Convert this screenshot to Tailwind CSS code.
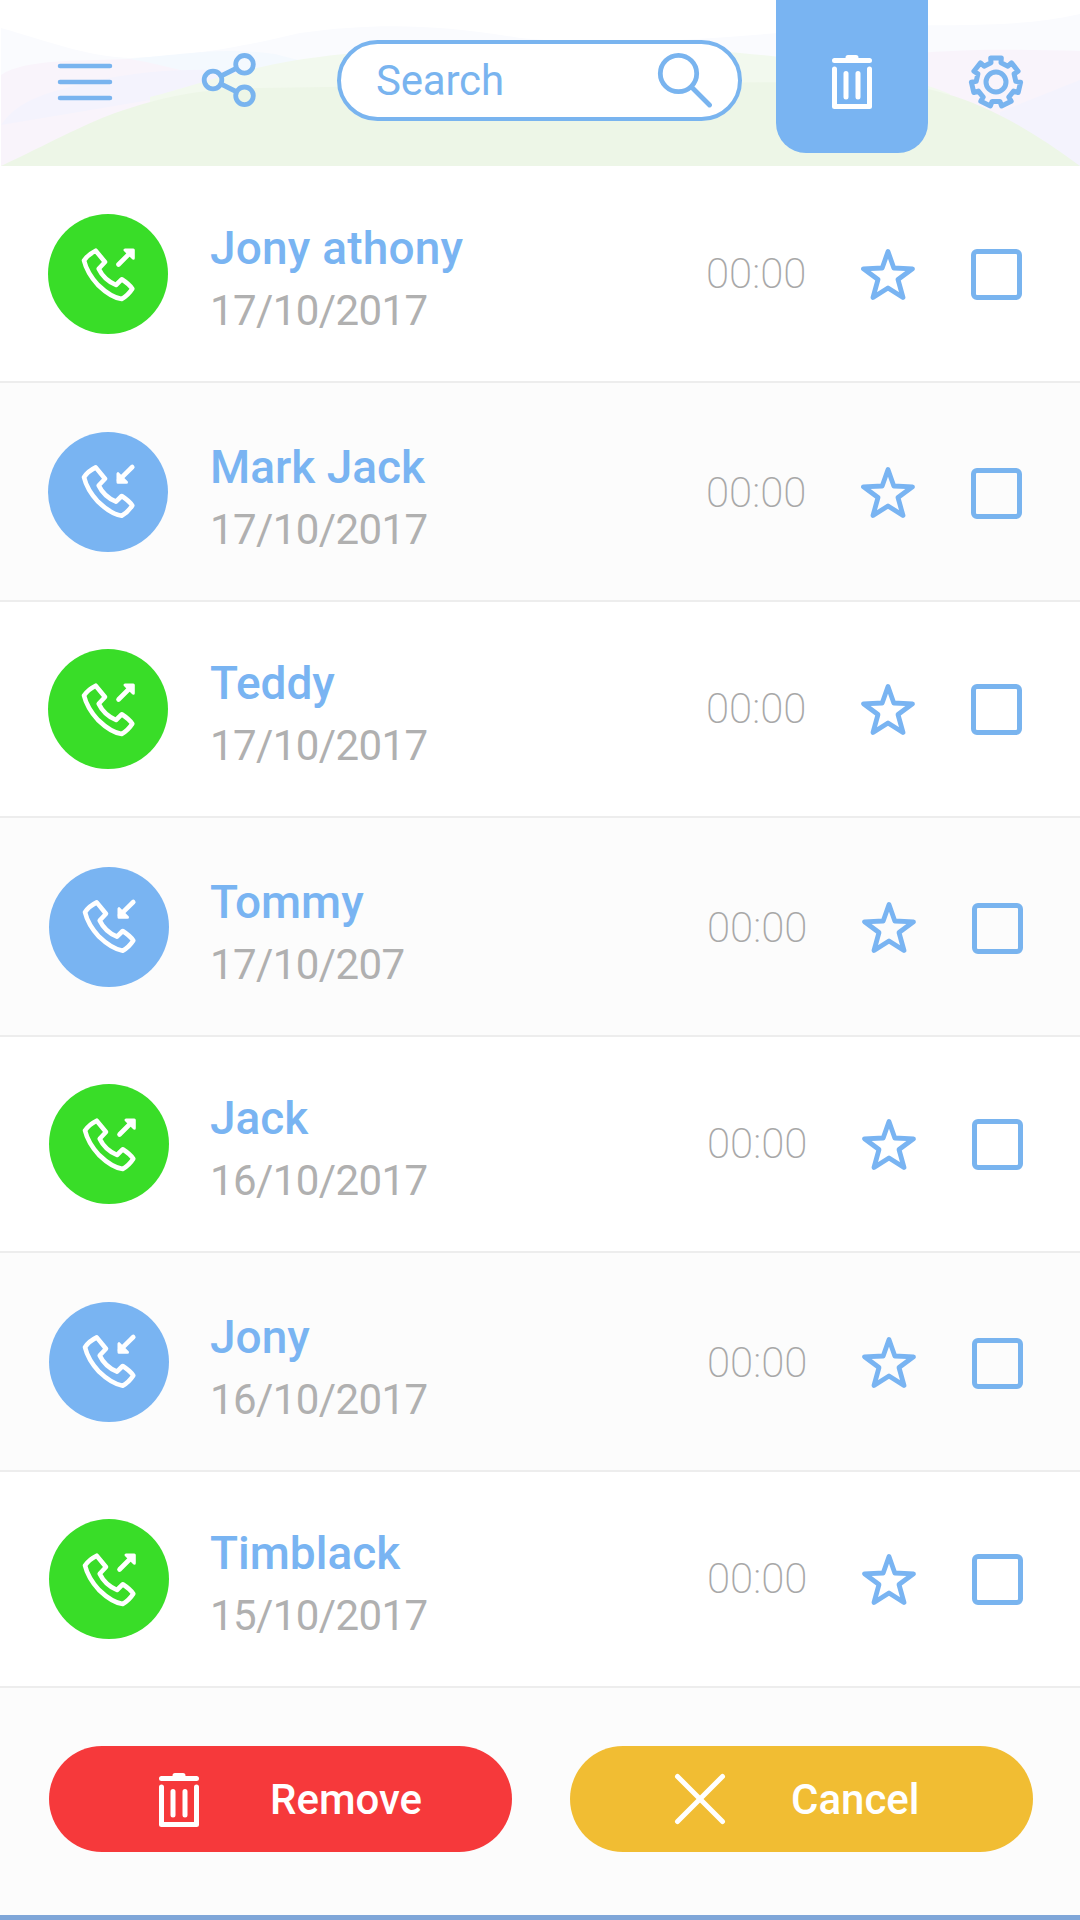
<!DOCTYPE html>
<html lang="en">
<head>
<meta charset="utf-8">
<title>Call history</title>
<script src="https://cdn.jsdelivr.net/npm/@tailwindcss/browser@4"></script>
</head>
<body class="bg-white">
<svg class="hidden">
  <symbol id="phone" viewBox="0 0 56 56" overflow="visible"><path d="M15.700 4.700 25 16 18.700 22.800Q24 34 36 39L41.700 33.300Q49 38 52.300 42.800Q48 49.500 41.700 53Q31 51.500 18 39Q7 27 4 14.500Q8 8.500 15.700 4.700Z"/></symbol>
  <symbol id="trash" viewBox="0 0 42 56" overflow="visible"><path d="M3.500 7.500H38.500M17 4.500H25M3.500 16V53.500H38.500V16M15 20.500V44M27 20.500V44" fill="none" stroke="currentColor" stroke-width="5" stroke-linecap="round" stroke-linejoin="round"/></symbol>
</svg>
<div class="flex h-[1920px] w-[1080px] flex-col overflow-hidden font-['Roboto',sans-serif] text-[#79b4f2]">
  <header class="relative flex h-[166px] shrink-0">
    <svg class="absolute inset-0 h-[166px] w-[1080px]" viewBox="0 0 1080 166">
      <path fill="#fafbfe" d="M1 28C50 42 85 56 130 58C200 55 240 47 300 33C380 22 440 25 520 38C640 50 760 32 880 26C960 24 1020 28 1080 14V166H1Z"/>
      <path fill="#f4f9fe" d="M130 59C200 52 230 48 275 54C320 66 350 70 400 78V110H90Z"/>
      <path fill="#f9f4fb" d="M1 75C25 58 90 61 130 59C165 65 185 72 220 80V166H1Z"/>
      <path fill="#f9f4fb" d="M860 60C940 48 1000 49 1080 51V166H860Z"/>
      <path fill="#f4f3fd" d="M1 125C20 98 50 92 90 82C160 66 220 68 300 75 380 90V166H1Z"/>
      <path fill="#f4f3fd" d="M1080 80C1050 92 1025 102 1000 112V166H1080Z"/>
      <path fill="#f2f9ee" d="M150 97C200 85 250 63 345 54C460 46 640 45 740 53C840 62 900 74 950 94V166H150Z"/>
      <path fill="#edf6e7" d="M1 166C50 143 80 126 115 113C165 96 200 89 260 88C520 84 700 82 860 82C950 82 1010 115 1080 166Z"/>
    </svg>
    <div class="relative flex w-full items-start text-[#79b4ef]">
      <svg class="ml-[57px] mt-[62px] h-[40px] w-[56px]" viewBox="0 0 56 40" fill="none" stroke="currentColor" stroke-width="4.500" stroke-linecap="round"><path d="M3 4H53M3 20H53M3 36H53"/></svg>
      <svg class="ml-[87px] mt-[50px] h-[60px] w-[60px]" viewBox="0 0 60 60" fill="none" stroke="currentColor" stroke-width="4.800"><circle cx="13" cy="30" r="8.800"/><circle cx="44.500" cy="14.300" r="8.800"/><circle cx="44.500" cy="45.800" r="8.800"/><path d="M21 26 36 18.500M21 34 36 41.500"/></svg>
      <div class="ml-[77px] mt-[40px] flex h-[81px] w-[405px] items-center rounded-full border-4 border-[#79b4ef] bg-white pl-[35px]">
        <span class="w-[276px] text-[42px] leading-[50px] tracking-[-0.2px]">Search</span>
        <svg class="h-[60px] w-[60px] shrink-0" viewBox="0 0 60 60" fill="none" stroke="currentColor" stroke-width="4.800" stroke-linecap="round"><circle cx="26.500" cy="22.500" r="18.200"/><path d="M40 36.500 57.500 54"/></svg>
      </div>
      <div class="ml-[34px] flex h-[153px] w-[152px] items-start justify-center rounded-b-[30px] bg-[#79b4f2] pt-[53px] text-white"><svg class="h-[56px] w-[42px]"><use href="#trash"/></svg></div>
      <svg id="gear" class="ml-[38px] mt-[52px] h-[60px] w-[60px]" viewBox="-30 -30 60 60" fill="none" stroke="currentColor" stroke-width="5" stroke-linejoin="round"><circle r="10"/></svg>
    </div>
  </header>
  <main id="calls"></main>
  <footer class="flex h-[227px] shrink-0 gap-[58px] bg-[#fcfcfc] pl-[49px] pt-[58px] text-[42px] font-medium text-white">
    <button class="flex h-[106px] w-[463px] items-center rounded-full bg-[#f6393b] pl-[109px]"><svg class="h-[56px] w-[42px]"><use href="#trash"/></svg><span class="ml-[70px]">Remove</span></button>
    <button class="flex h-[106px] w-[463px] items-center rounded-full bg-[#f1bd33] pl-[104px]"><svg class="h-[52px] w-[52px]" viewBox="0 0 52 52" stroke="currentColor" stroke-width="5" stroke-linecap="round"><path d="M3.500 3.500 48.500 48.500M48.500 3.500 3.500 48.500"/></svg><span class="ml-[65px]">Cancel</span></button>
  </footer>
  <div class="h-[5px] shrink-0 bg-[#7fa6d8]"></div>
</div>
<script>
  // Outline of the seven-toothed settings wheel
  const points = [];
  for (let i = 0; i < 7; i++) {
    const mid = -90 + i * 360 / 7;
    [[-14.5, 19.8], [-12.5, 24.6], [12.5, 24.6], [14.5, 19.8]].forEach(([a, r]) => {
      const t = (mid + a) * Math.PI / 180;
      points.push((r * Math.cos(t)).toFixed(1) + ' ' + (r * Math.sin(t)).toFixed(1));
    });
  }
  document.getElementById('gear').insertAdjacentHTML('beforeend', `<path d="M${points.join('L')}Z"/>`);

  const calls = [
    ['Jony athony', '17/10/2017', 'h-[217px] pt-[48px]', 'pl-12'],
    ['Mark Jack', '17/10/2017', 'h-[219px] pt-[49px]', 'pl-12'],
    ['Teddy', '17/10/2017', 'h-[216px] pt-[47px]', 'pl-12'],
    ['Tommy', '17/10/207', 'h-[219px] pt-[49px]', 'pl-[49px]'],
    ['Jack', '16/10/2017', 'h-[216px] pt-[47px]', 'pl-[49px]'],
    ['Jony', '16/10/2017', 'h-[219px] pt-[49px]', 'pl-[49px]'],
    ['Timblack', '15/10/2017', 'h-[216px] pt-[47px]', 'pl-[49px]'],
  ];
  document.getElementById('calls').innerHTML = calls.map(([name, date, size, pad], i) => `
    <div class="flex items-start border-b-2 border-[#ededed] ${size} ${pad} ${i % 2 ? 'bg-[#fcfcfc]' : 'bg-white'}">
      <div class="flex size-[120px] items-center justify-center rounded-full ${i % 2 ? 'bg-[#79b4f2]' : 'bg-[#39dd28]'}">
        <svg class="size-[56px] overflow-visible" viewBox="${i % 2 ? '0 1.3 56 56' : '0 0 56 56'}" fill="none" stroke="white" stroke-width="4.600" stroke-linecap="round" stroke-linejoin="round"><use href="#phone" width="56" height="56"/>
        ${i % 2 ? '<path d="M52.300 4.300 39 17.500"/><path fill="white" stroke-width="3" d="M38 11V19.500H46.500Z"/>' : '<path d="M38.500 18.500 51 6"/><path fill="white" stroke-width="3" d="M45 4H53.300V12.300Z"/>'}</svg>
      </div>
      <div class="${i < 3 ? 'ml-[42px] w-[496px]' : 'ml-[41px] w-[497px]'} ${i % 2 ? 'mt-[3px]' : 'mt-[2px]'}">
        <div class="text-[46px] font-medium leading-[64px] ${i ? 'tracking-normal' : 'tracking-[0.2px]'}">${name}</div>
        <div class="text-[42px] leading-[62px] tracking-[-0.6px] text-[#b0b0b0]">${date}</div>
      </div>
      <div class="w-[154px] text-[42px] font-extralight leading-[50px] text-[#a8a8a8] ${i % 2 ? 'mt-[36px]' : 'mt-[35px]'}">00:00</div>
      <svg class="mt-[33px] h-[56px] w-[56px]" viewBox="0 0 56 56" fill="none" stroke="currentColor" stroke-width="4.800" stroke-linejoin="round"><path d="M28 4.500 33.800 21 52.500 21.800 38 32.500 43 50.500 28 41 13 50.500 18 32.500 3.500 21.800 22.200 21Z"/></svg>
      <div class="ml-[55px] size-[51px] rounded-[6px] border-[5px] border-[#79b4ef] ${i % 2 ? 'mt-[36px]' : 'mt-[35px]'}"></div>
    </div>`).join('');
</script>
</body>
</html>
